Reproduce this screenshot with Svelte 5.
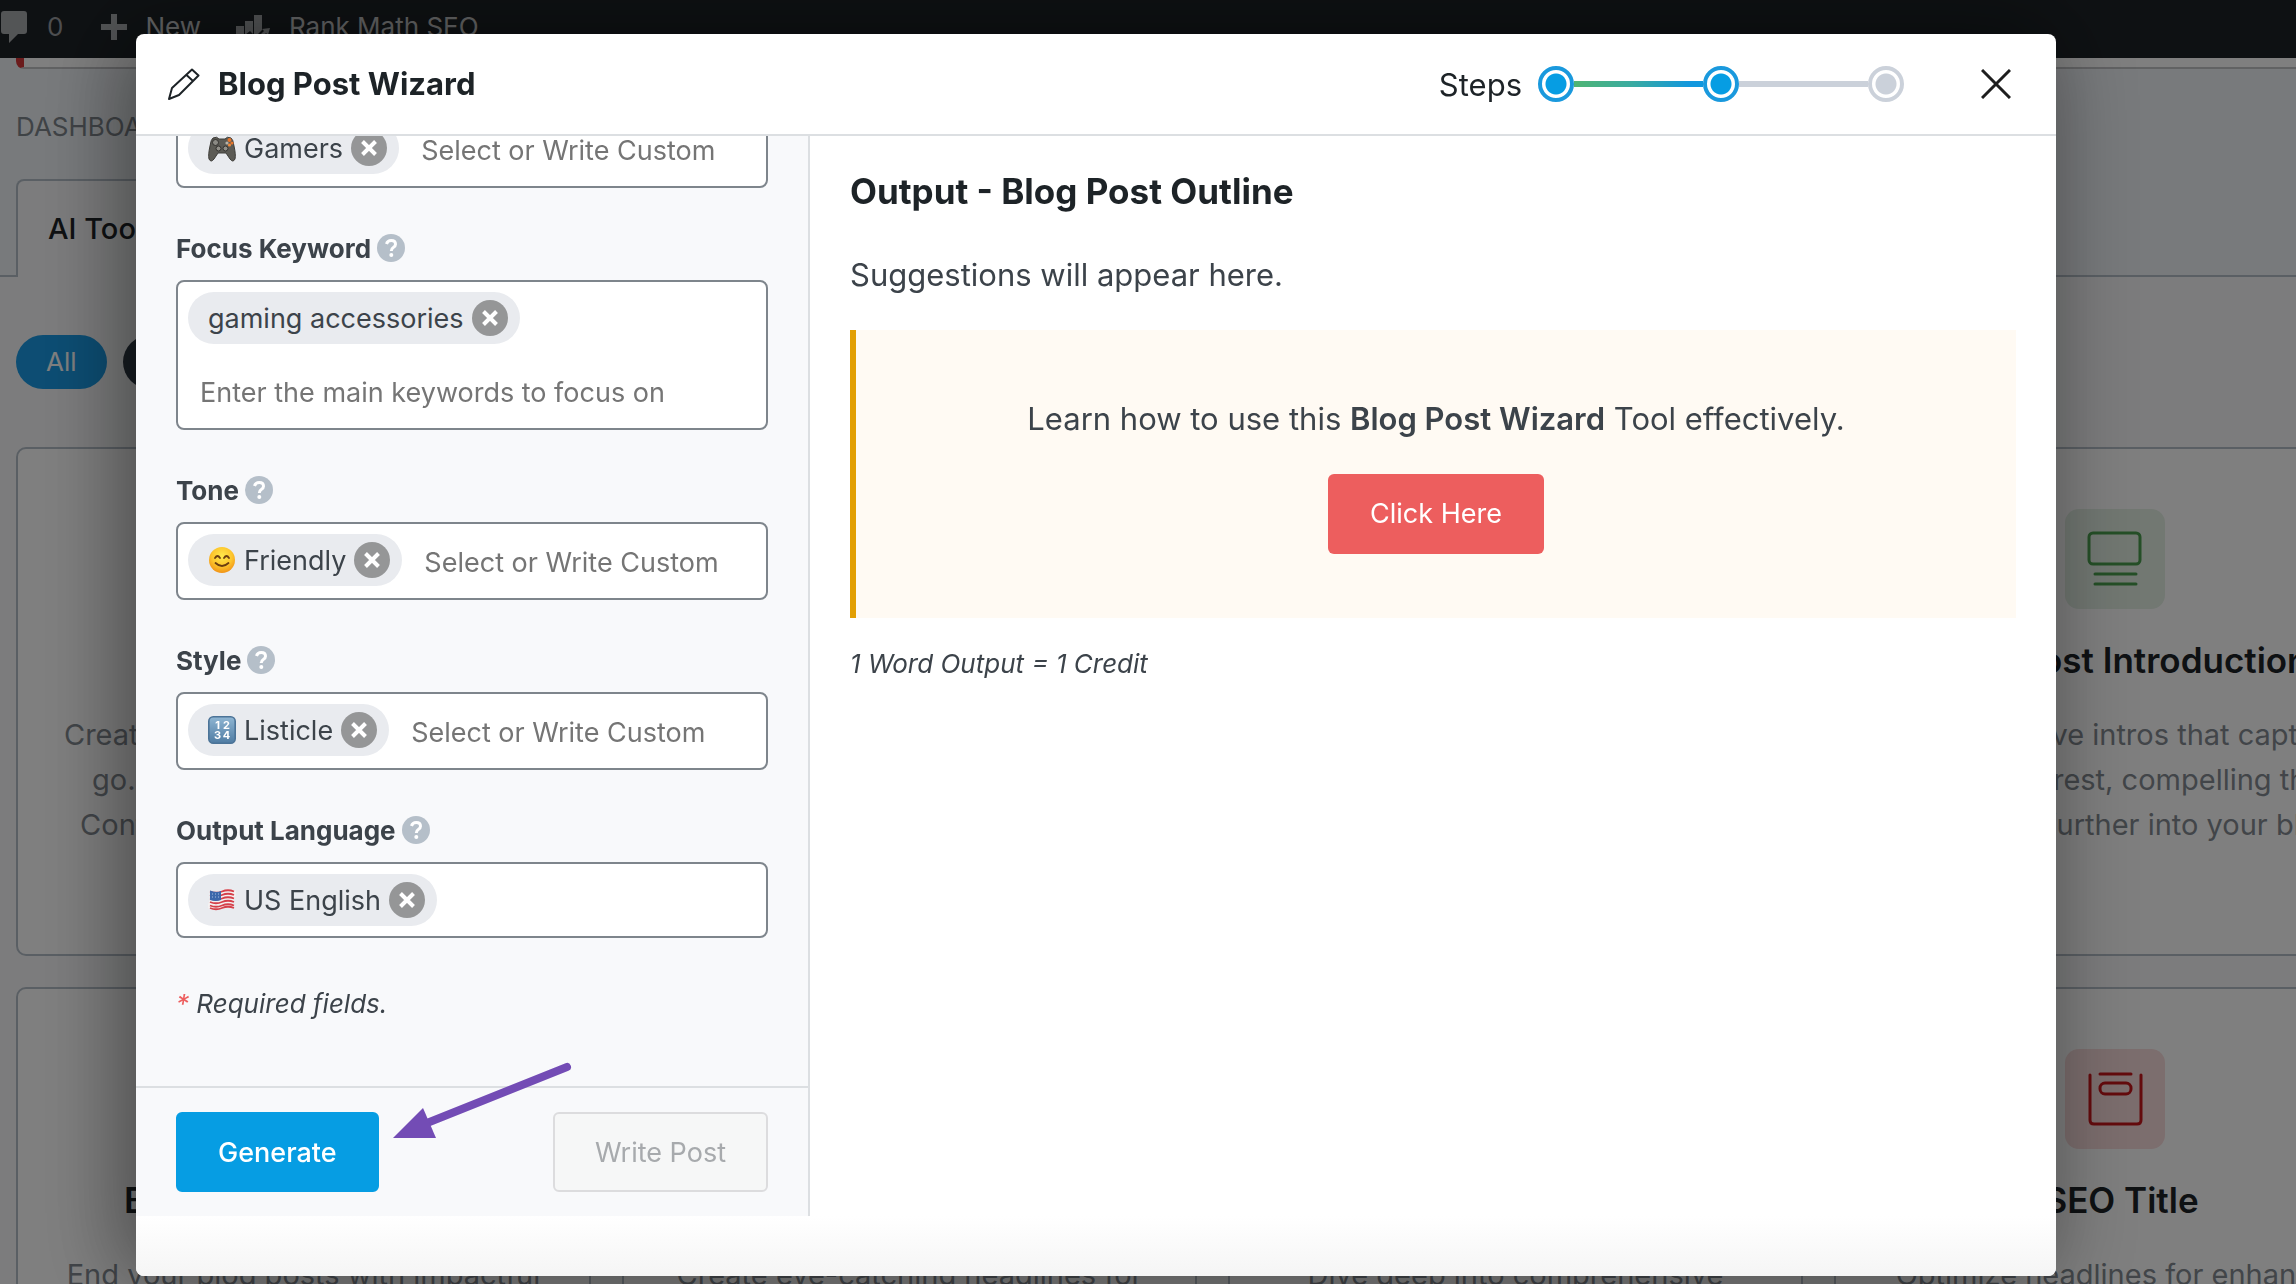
<script>
  const fields = [
    { id: 'audience', label: '', tag: 'Gamers', icon: 'pad', placeholder: 'Select or Write Custom' },
    { id: 'keyword', label: 'Focus Keyword', tag: 'gaming accessories', icon: '', placeholder: 'Enter the main keywords to focus on', wide: true },
    { id: 'tone', label: 'Tone', tag: 'Friendly', icon: 'smile', placeholder: 'Select or Write Custom' },
    { id: 'style', label: 'Style', tag: 'Listicle', icon: 'numbers', placeholder: 'Select or Write Custom' },
    { id: 'language', label: 'Output Language', tag: 'US English', icon: 'flag', placeholder: '' }
  ];

  const cards = [
    { icon: '', title: 'Blog Post Wizard', lines: ['Create a complete blog post in one', 'go. Just fill in some details and', 'Content AI handles all of the rest'] },
    { icon: '', title: 'Blog Post Idea', lines: ['Get fresh ideas for'] },
    { icon: '', title: 'Blog Post Outline', lines: ['Structure your posts'] },
    { icon: 'intro', title: 'Blog Post Introduction', lines: ['Get attractive intros that capture', 'a reader’s interest, compelling them to', 'then read further into your blog'] },
    { icon: '', title: 'Blog Post Conclusion', lines: ['End your blog posts with impactful'] },
    { icon: '', title: 'Post Title', lines: ['Create eye-catching headlines for'] },
    { icon: '', title: 'Topic Research', lines: ['Dive deep into comprehensive'] },
    { icon: 'seo', title: 'SEO Title', lines: ['Optimize headlines for enhanced'] }
  ];
</script>

<div class="page" aria-hidden="true">
  <div class="adminbar">
    <svg class="bubble" viewBox="0 0 26 32"><path fill="#a7aaad" d="M3 0h20q3 0 3 3v17q0 3-3 3h-6l-9 9v-9H3q-3 0-3-3V3q0-3 3-3z" /></svg>
    <span class="count">0</span>
    <svg class="plus" viewBox="0 0 26 26"><path fill="#a7aaad" d="M10 0h6v10h10v6H16v10h-6V16H0v-6h10z" /></svg>
    <span class="new">New</span>
    <svg class="chart" viewBox="0 0 36 28"><path fill="#a7aaad" d="M1 11h8v8l-8 3zM10 6h8v13l-3-3-5 4zM19 0h8v15l-6 6-2-1zM1 26l14-7 6 5 8-8-2-2 8-1-2 7-2-2-9 10-7-5-12 6z" /></svg>
    <span>Rank Math SEO</span>
  </div>
  <div class="notice"></div>
  <div class="crumb">DASHBOARD</div>
  <div class="tabs"><div class="tab">AI Tools</div></div>
  <div class="tools">
    <div class="pills"><span class="pill on">All</span><span class="pill">SEO</span></div>
    <div class="cards">
      {#each cards as card}
        <div class="card">
          <div class="tile {card.icon}">
            {#if card.icon === 'intro'}
              <svg viewBox="0 0 60 60" fill="none" stroke="#4a9f4e" stroke-width="3" stroke-linecap="round"><rect x="4" y="4" width="51" height="31" rx="4" /><path d="M10 45h41M10 55h41" /></svg>
            {:else if card.icon === 'seo'}
              <svg viewBox="0 0 60 60" fill="none" stroke="#c8161a" stroke-width="3" stroke-linecap="round"><path d="M5 6v45q0 4 4 4h43q4 0 4-4V6M15 5h31" /><rect x="15" y="14" width="31" height="11" rx="5" /></svg>
            {/if}
          </div>
          <h3>{card.title}</h3>
          <p>{#each card.lines as line}<span>{line}</span>{/each}</p>
        </div>
      {/each}
    </div>
  </div>
</div>

<div class="overlay">
  <div class="modal" role="dialog" aria-modal="true" aria-labelledby="wizard-title">
    <header>
      <svg class="pencil" viewBox="0 0 32 32" fill="none" stroke="#1d2327" stroke-width="2" stroke-linejoin="round"><path d="M1 31l3-11L24 1.500l6.500 6L11 27zM18.500 7l6.500 6" /></svg>
      <h1 id="wizard-title">Blog Post Wizard</h1>
      <div class="steps">
        <span class="steps-label">Steps</span>
        <span class="dot"></span><span class="line done"></span>
        <span class="dot"></span><span class="line"></span>
        <span class="dot off"></span>
      </div>
      <button class="close" aria-label="Close"><svg viewBox="0 0 30 30" stroke="#1e1e1e" stroke-width="3"><path d="M1 1l28 28M29 1L1 29" /></svg></button>
    </header>

    <div class="body">
      <form class="side" onsubmit={(e) => e.preventDefault()}>
        <div class="fields">
          {#each fields as f}
            <div class="field">
              {#if f.label}
                <div class="label"><label for={f.id}>{f.label}</label>
                  <svg class="help" viewBox="0 0 28 28"><circle cx="14" cy="14" r="14" fill="#b5bfc9" /><path d="M9.500 10q1-3.500 4.700-3.500 4.300 0 4.300 3.700 0 2-2.200 3.300-2 1.200-2 3.500" fill="none" stroke="#fff" stroke-width="3" /><circle cx="14.300" cy="21" r="2" fill="#fff" /></svg>
                </div>
              {/if}
              <div class="box" class:wide={f.wide} class:single={!f.placeholder}>
                <span class="tag">
                  {#if f.icon === 'pad'}
                    <svg class="emoji" viewBox="0 0 28 28"><path d="M5 4q4-2 6 1h6q2-3 6-1 2 1 3 8 2 9 1 13-2 4-5 0l-4-6h-8l-4 6q-3 4-5 0-1-4 1-13 1-7 3-8z" fill="#5c5b55" stroke="#3f3e3a" /><circle cx="7.500" cy="8.500" r="3" fill="#8b8a84" stroke="#33322f" /><circle cx="10.500" cy="14.500" r="2.500" fill="#918f88" stroke="#33322f" /><circle cx="17.500" cy="14.500" r="2.500" fill="#918f88" stroke="#33322f" /><circle cx="21.500" cy="6" r="2" fill="#e8762c" /><circle cx="19" cy="9" r="1.600" fill="#b8b3a8" /><circle cx="24" cy="9" r="1.600" fill="#e8762c" /><circle cx="21.500" cy="11" r="1.600" fill="#f08a3c" /></svg>
                  {:else if f.icon === 'smile'}
                    <svg class="emoji" viewBox="0 0 28 28"><defs><radialGradient id="face" cx="50%" cy="35%" r="65%"><stop offset="0" stop-color="#ffe94d" /><stop offset=".6" stop-color="#fdc52c" /><stop offset="1" stop-color="#f19317" /></radialGradient></defs><circle cx="14" cy="14" r="13" fill="url(#face)" /><g fill="none" stroke="#6b3d10" stroke-width="1.800" stroke-linecap="round"><path d="M7 12q2.500-4 5 0M16 12q2.500-4 5 0M7.500 17q6.500 6 13 0" /></g></svg>
                  {:else if f.icon === 'numbers'}
                    <svg class="emoji" viewBox="0 0 28 28"><defs><linearGradient id="key" x2="0" y2="1"><stop offset="0" stop-color="#8fb6d3" /><stop offset="1" stop-color="#4f7ca3" /></linearGradient></defs><rect x=".8" y=".8" width="26.400" height="26.400" rx="4.500" fill="url(#key)" stroke="#4b7397" stroke-width="1.600" /><g fill="#fff" font-family="Inter, sans-serif" font-weight="700" font-size="11" text-anchor="middle"><text x="9.500" y="12.500">1</text><text x="18.500" y="12.500">2</text><text x="9.500" y="23">3</text><text x="18.500" y="23">4</text></g></svg>
                  {:else if f.icon === 'flag'}
                    <svg class="emoji" viewBox="0 0 28 28"><g fill="none" stroke-width="2"><path d="M2 13.500q6 2.500 12 0t12 0" stroke="#f4f1f1" stroke-width="18" /><path d="M2 5.500q6 2.500 12 0t12 0M2 9q6 2.500 12 0t12 0M2 12.500q6 2.500 12 0t12 0M2 16q6 2.500 12 0t12 0M2 19.500q6 2.500 12 0t12 0M2 22q6 2.500 12 0t12 0" stroke="#d5404a" stroke-width="1.800" /></g><path d="M2 4.500q6 2.500 11 .5v9q-5 2-11 0z" fill="#3d68ab" /><path d="M4 8h8M4 11h8" stroke="#a9bfe0" stroke-dasharray="1 2" /></svg>
                  {/if}
                  <span class="tag-text">{f.tag}</span>
                  <button type="button" class="remove" aria-label="Remove {f.tag}"><svg viewBox="0 0 16 16" stroke="#fff" stroke-width="4"><path d="M1.500 1.500l13 13M14.500 1.500l-13 13" /></svg></button>
                </span>
                <input id={f.id} type="text" placeholder={f.placeholder} aria-label={f.label || 'Audience'} />
              </div>
            </div>
          {/each}
          <p class="required"><span>*</span> Required fields.</p>
        </div>
        <div class="actions">
          <button type="submit" class="btn primary">Generate</button>
          <button type="button" class="btn muted" disabled>Write Post</button>
          <svg class="arrow" viewBox="0 0 180 78"><path d="M174 5L34 61" stroke="#734cb5" stroke-width="8" stroke-linecap="round" /><path d="M0 76L30 46 43 76z" fill="#734cb5" /></svg>
        </div>
      </form>

      <section class="output">
        <h2>Output - Blog Post Outline</h2>
        <p class="hint">Suggestions will appear here.</p>
        <div class="callout">
          <p>Learn how to use this <strong>Blog Post Wizard</strong> Tool effectively.</p>
          <a class="btn red" href="#learn">Click Here</a>
        </div>
        <p class="credit">1 Word Output = 1 Credit</p>
      </section>
    </div>
    <div class="foot"></div>
  </div>
</div>

<style>
  :global(body) { overflow: hidden; }
  * { box-sizing: border-box; }
  h1, h2, h3, p { margin: 0; }
  button, input { font-family: inherit; }
  svg { display: block; flex: none; }
  .page, .overlay { font-family: Inter, "Liberation Sans", sans-serif; }

  .page { height: 100vh; overflow: hidden; background: #f0f4f8; color: #1d2327; }
  .adminbar { display: flex; align-items: flex-start; height: 58px; padding-top: 11px; background: #1d2327; color: #c8c9ca; font-size: 26px; line-height: 32px; white-space: nowrap; }
  .bubble { width: 26px; height: 32px; margin-left: 1px; }
  .count { margin-left: 20px; color: #9a9da0; }
  .plus { width: 26px; height: 26px; margin: 3px 18px 0 38px; }
  .chart { width: 36px; height: 28px; margin: 4px 18px 0 34px; }
  .notice { height: 11px; margin-left: 16px; background: #fff; border-left: 8px solid #d63638; border-bottom: 2px solid #c3c4c7; border-bottom-left-radius: 8px; }
  .crumb { height: 110px; padding: 42px 16px 0; color: #7f868d; font-size: 26px; line-height: 32px; }
  .tabs { height: 98px; padding-left: 16px; border-bottom: 2px solid #b5bfc9; }
  .tab { width: 240px; height: 98px; padding: 0 30px; background: #f8f9fa; border: 2px solid #b5bfc9; border-bottom: 0; border-radius: 8px 8px 0 0; font-size: 29px; font-weight: 500; line-height: 96px; }
  .tools { padding-top: 58px; background: #f8f9fa; }
  .pills { display: flex; gap: 16px; margin: 0 16px 58px; }
  .pill { padding: 0 30px; border-radius: 27px; background: #2f3a45; color: #fff; font-size: 26px; line-height: 54px; }
  .pill.on { background: #1a9be6; }
  .cards { display: grid; grid-template-columns: repeat(4, 1fr); gap: 31px; margin: 0 -113px 0 16px; }
  .card { height: 509px; padding: 60px 0; border: 2px solid #b5bfc9; border-radius: 10px; background: #fff; text-align: center; }
  .tile { display: grid; place-items: center; width: 100px; height: 100px; margin-left: calc(50% - 57px); border-radius: 14px; }
  .tile svg { width: 60px; height: 60px; }
  .intro { background: #e4f0e5; }
  .seo { background: #f9dcdc; }
  h3 { margin-top: 29px; font-size: 35px; font-weight: 600; line-height: 44px; white-space: nowrap; }
  .card p { margin-top: 30px; color: #848b92; font-size: 29px; line-height: 45px; white-space: nowrap; }
  .card p span { display: block; }

  .overlay { position: fixed; inset: 0; display: flex; padding: 34px 240px 8px 136px; background: rgba(0, 0, 0, 0.5); color: #3c434a; }
  .modal { display: flex; flex: 1; flex-direction: column; min-width: 0; overflow: hidden; border-radius: 8px; background: #fff; box-shadow: 0 0 90px rgba(0, 0, 0, 0.3), -24px 0 80px rgba(0, 0, 0, 0.2); }
  header { display: flex; align-items: center; height: 102px; padding: 0 45px 0 32px; border-bottom: 2px solid #dcdfe2; color: #1d2327; flex: none; }
  .pencil { width: 32px; height: 32px; }
  h1 { margin-left: 18px; font-size: 31px; font-weight: 700; line-height: 40px; }
  .steps { display: flex; align-items: center; margin-left: auto; }
  .steps-label { margin-right: 16px; font-size: 31px; }
  .dot { width: 36px; height: 36px; border: 4px solid #1a99dd; border-radius: 50%; background: radial-gradient(circle, #069de3 10px, #fff 11px); }
  .dot.off { border-color: #cbd1da; background: radial-gradient(circle, #cbd1da 10px, #fff 11px); }
  .line { width: 129px; height: 6px; background: #cbd1da; }
  .line.done { background: linear-gradient(90deg, #4fb574, #3aaba1 45%, #1197de 90%); }
  .close { margin-left: 77px; padding: 0; border: 0; background: none; }
  .close svg { width: 30px; height: 30px; }

  .body { display: flex; flex: 1; min-height: 0; }
  .side { display: flex; flex: 0 0 674px; flex-direction: column; border-right: 2px solid #dcdfe2; background: #f8f9fb; }
  .fields { display: flex; flex: 1; flex-direction: column; justify-content: flex-end; min-height: 0; overflow: hidden; padding: 0 40px 62px; }
  .field { flex: none; margin-bottom: 40px; }
  .label { display: flex; align-items: center; gap: 6px; height: 40px; margin-bottom: 12px; font-size: 26px; font-weight: 700; }
  .help { width: 28px; height: 28px; }
  .box { display: flex; flex-wrap: wrap; row-gap: 20px; padding: 10px 10px 8px; border: 2px solid #7e858c; border-radius: 8px; background: #fff; }
  .tag { display: flex; align-items: center; height: 52px; padding: 0 12px 0 20px; border-radius: 26px; background: #e9ebef; font-size: 27px; white-space: nowrap; }
  .emoji { width: 28px; height: 28px; margin-right: 8px; }
  .remove { display: grid; place-items: center; width: 36px; height: 36px; margin-left: 8px; padding: 0; border: 0; border-radius: 50%; background: #959697; }
  .remove svg { width: 16px; height: 16px; }
  input { flex: 1; min-width: 0; height: 56px; margin: 0; padding: 0 0 0 22px; border: 0; outline: 0; background: none; color: #3c434a; font-size: 27px; }
  .wide input { flex: 0 0 100%; padding-left: 12px; }
  .single input { height: 54px; }
  input::placeholder { color: #757575; opacity: 1; }
  .required { flex: none; margin-top: 6px; font-size: 26px; font-style: italic; line-height: 40px; }
  .required span { color: #ed5e5e; }
  .actions { position: relative; display: flex; align-items: center; justify-content: space-between; height: 130px; padding: 0 40px; border-top: 2px solid #dcdfe2; flex: none; }
  .arrow { position: absolute; left: 257px; top: -26px; width: 180px; height: 78px; }
  .btn { height: 80px; padding: 0 40px; border: 2px solid transparent; border-radius: 6px; font-size: 27px; font-weight: 400; text-decoration: none; white-space: nowrap; }
  .primary { background: #069de3; border-color: #069de3; color: #fff; font-weight: 500; }
  .muted { background: #f6f7f7; border-color: #dcdcde; color: #a7aaad; }
  .red { display: block; background: #ed5e5e; color: #fff; line-height: 76px; }

  .output { flex: 1; min-width: 0; padding: 32px 40px; }
  h2 { color: #1d2327; font-size: 35px; font-weight: 700; line-height: 46px; }
  .hint { margin-top: 38px; font-size: 31px; line-height: 46px; }
  .callout { display: flex; flex-direction: column; align-items: center; height: 288px; margin-top: 32px; padding-top: 66px; border-left: 6px solid #e29f04; background: #fffaf3; }
  .callout p { margin-bottom: 32px; font-size: 31px; line-height: 46px; }
  strong { font-weight: 600; }
  .credit { margin-top: 26px; font-size: 26px; font-style: italic; line-height: 40px; }
  .foot { flex: none; height: 60px; background: linear-gradient(#fff, #f5f5f5); }
</style>
